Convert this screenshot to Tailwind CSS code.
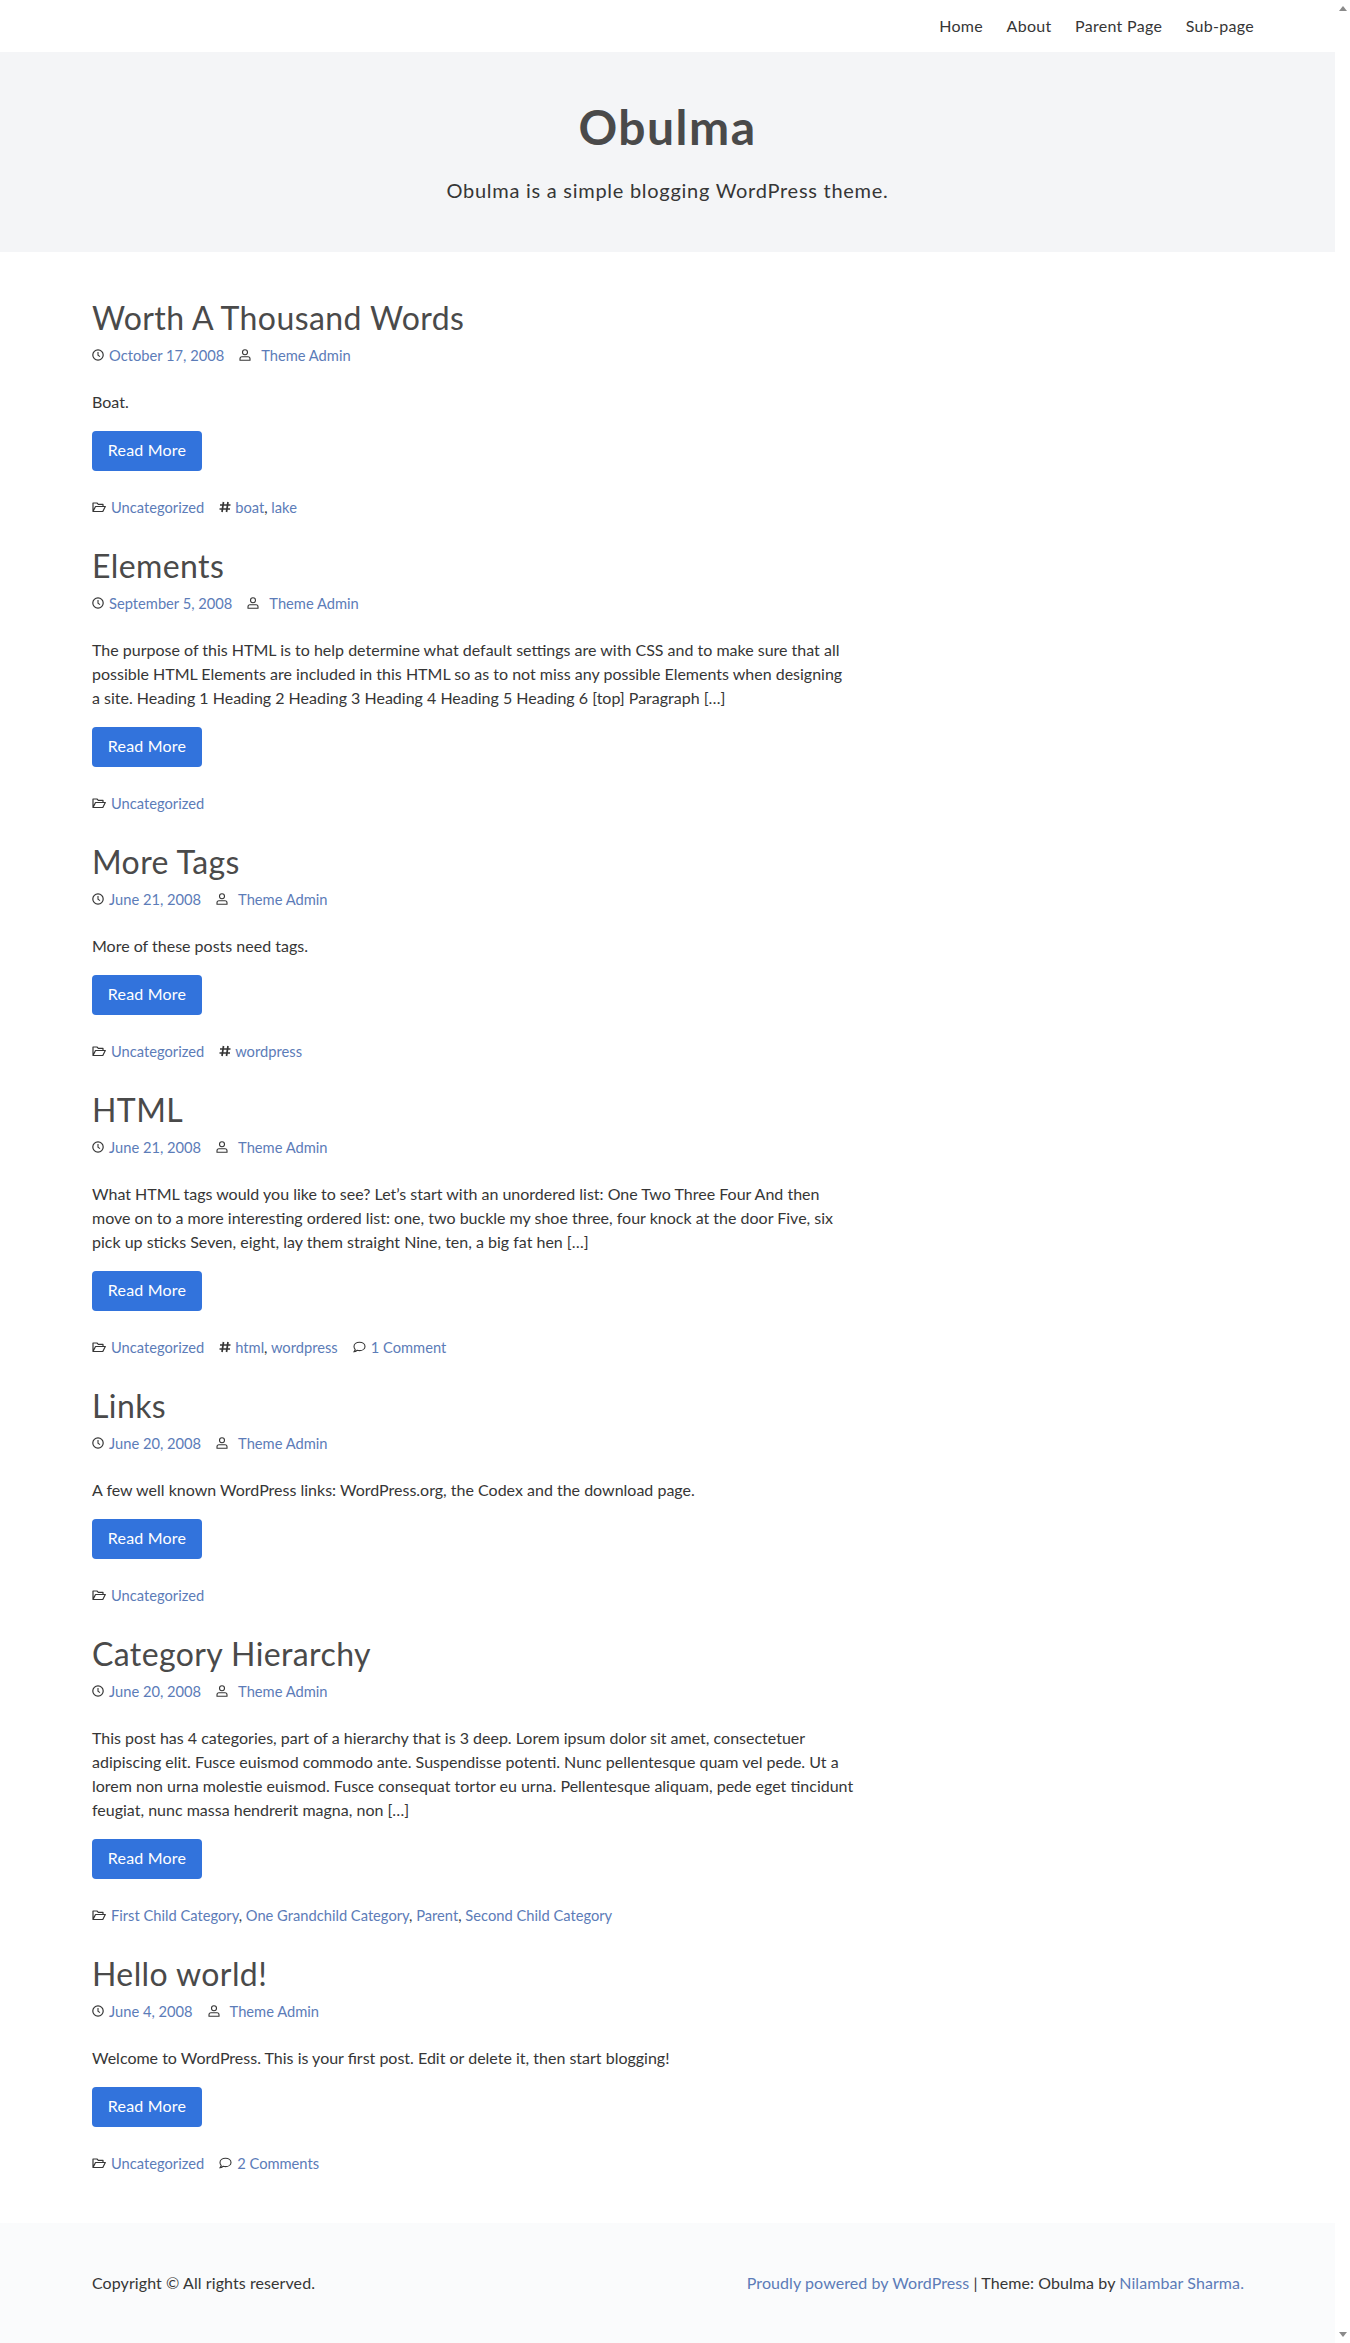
<!DOCTYPE html>
<html lang="en">
<head>
    <meta charset="UTF-8">
    <meta name="viewport" content="width=device-width, initial-scale=1.0">
    <script src="https://cdn.jsdelivr.net/npm/@tailwindcss/browser@4"></script>
    <title>Obulma</title>
</head>
<body class="font-['Lato',sans-serif] text-[#363636] text-base leading-6 bg-white">
    <!-- icon set -->
    <svg class="hidden">
        <symbol id="clock" viewBox="0 0 12 12"><circle cx="6" cy="6" r="5.2" fill="none" stroke="currentColor" stroke-width="1.2"/><path d="M6 3v3.3l2 1.3" fill="none" stroke="currentColor" stroke-width="1.1"/></symbol>
        <symbol id="user" viewBox="0 0 12 12"><circle cx="6" cy="3.2" r="2.5" fill="none" stroke="currentColor" stroke-width="1.1"/><path d="M1 11.2V9.8c0-1.2.9-2 2-2h6c1.100 0 2 .8 2 2v1.400z" fill="none" stroke="currentColor" stroke-width="1.1"/></symbol>
        <symbol id="folder" viewBox="0 0 14 12"><path d="M1 10.500V2h4l1.300 1.300h4.700v2M1 10.500h9.800L13.300 5.500H3.500z" fill="none" stroke="currentColor" stroke-width="1.200" stroke-linejoin="round"/></symbol>
        <symbol id="hash" viewBox="0 0 12 12"><path d="M4.500 1 3 11M9 1 7.500 11M1 4h10.500M.5 8h10.500" fill="none" stroke="currentColor" stroke-width="1.700"/></symbol>
        <symbol id="comment" viewBox="0 0 13 12"><path d="M6.500 1.200c3 0 5.500 1.800 5.500 4.200s-2.500 4.200-5.500 4.200c-.8 0-1.500-.1-2.200-.3C3.400 10 2.300 10.800 1 10.800c.7-.8 1.100-1.700 1.200-2.400C1.400 7.600 1 6.600 1 5.400 1 3 3.500 1.200 6.500 1.200z" fill="none" stroke="currentColor" stroke-width="1.100"/></symbol>
    </svg>

    <div class="flex min-h-[2343px]">
        <div class="w-[1335px]">
            <nav class="h-[52px] flex justify-end items-center pr-[81px] gap-[23.500px] tracking-[0.3px]">
                <a href="#">Home</a>
                <a href="#">About</a>
                <a href="#">Parent Page</a>
                <a href="#">Sub-page</a>
            </nav>

            <section class="h-[200px] bg-[#f4f5f7] pt-12 text-center">
                <h1 class="text-5xl leading-[54px] font-bold text-[#4a4a4a] mb-6 tracking-[1.5px]">Obulma</h1>
                <p class="text-xl leading-[25px] tracking-[0.73px]">Obulma is a simple blogging WordPress theme.</p>
            </section>

            <main class="pt-[46px] pb-[21px] pl-[92px] w-[900px]">
                <article class="pb-[27px]">
                    <h2 class="text-[32px] leading-10 text-[#4a4a4a] tracking-[0.4px] mb-2">Worth A Thousand Words</h2>
                    <div class="flex items-center text-[14.700px] h-[21px] pb-1 mb-6">
                        <svg class="w-3 h-3 mr-[5px]"><use href="#clock"/></svg>
                        <a href="#" class="text-[#5c7cb8]">October 17, 2008</a>
                        <svg class="w-3 h-3 ml-[15px] mr-[10px]"><use href="#user"/></svg>
                        <a href="#" class="text-[#5c7cb8]">Theme Admin</a>
                    </div>
                    <p class="-mt-px mb-[17px]">Boat.</p>
                    <a href="#" class="flex w-[110px] h-10 pb-[2px] items-center justify-center rounded bg-[#3273dc] text-white tracking-[0.2px] mb-[27px]">Read More</a>
                    <div class="flex items-center text-[14.700px] h-[21px] pb-1">
                        <svg class="w-[14px] h-3 mr-[5px]"><use href="#folder"/></svg>
                        <a href="#" class="text-[#5c7cb8]">Uncategorized</a>
                        <svg class="w-3 h-3 ml-[15px] mr-1"><use href="#hash"/></svg>
                        <span class="text-[#5c7cb8]"><a href="#">boat</a><span class="text-[#363636]">,</span> <a href="#">lake</a></span>
                    </div>
                </article>

                <article class="pb-[27px]">
                    <h2 class="text-[32px] leading-10 text-[#4a4a4a] tracking-[0.4px] mb-2">Elements</h2>
                    <div class="flex items-center text-[14.700px] h-[21px] pb-1 mb-6">
                        <svg class="w-3 h-3 mr-[5px]"><use href="#clock"/></svg>
                        <a href="#" class="text-[#5c7cb8]">September 5, 2008</a>
                        <svg class="w-3 h-3 ml-[15px] mr-[10px]"><use href="#user"/></svg>
                        <a href="#" class="text-[#5c7cb8]">Theme Admin</a>
                    </div>
                    <p class="-mt-px mb-[17px]">The purpose of this HTML is to help determine what default settings are with CSS and to make sure that all<br>possible HTML Elements are included in this HTML so as to not miss any possible Elements when designing<br>a site. Heading 1 Heading 2 Heading 3 Heading 4 Heading 5 Heading 6 [top] Paragraph […]</p>
                    <a href="#" class="flex w-[110px] h-10 pb-[2px] items-center justify-center rounded bg-[#3273dc] text-white tracking-[0.2px] mb-[27px]">Read More</a>
                    <div class="flex items-center text-[14.700px] h-[21px] pb-1">
                        <svg class="w-[14px] h-3 mr-[5px]"><use href="#folder"/></svg>
                        <a href="#" class="text-[#5c7cb8]">Uncategorized</a>
                    </div>
                </article>

                <article class="pb-[27px]">
                    <h2 class="text-[32px] leading-10 text-[#4a4a4a] tracking-[0.4px] mb-2">More Tags</h2>
                    <div class="flex items-center text-[14.700px] h-[21px] pb-1 mb-6">
                        <svg class="w-3 h-3 mr-[5px]"><use href="#clock"/></svg>
                        <a href="#" class="text-[#5c7cb8]">June 21, 2008</a>
                        <svg class="w-3 h-3 ml-[15px] mr-[10px]"><use href="#user"/></svg>
                        <a href="#" class="text-[#5c7cb8]">Theme Admin</a>
                    </div>
                    <p class="-mt-px mb-[17px]">More of these posts need tags.</p>
                    <a href="#" class="flex w-[110px] h-10 pb-[2px] items-center justify-center rounded bg-[#3273dc] text-white tracking-[0.2px] mb-[27px]">Read More</a>
                    <div class="flex items-center text-[14.700px] h-[21px] pb-1">
                        <svg class="w-[14px] h-3 mr-[5px]"><use href="#folder"/></svg>
                        <a href="#" class="text-[#5c7cb8]">Uncategorized</a>
                        <svg class="w-3 h-3 ml-[15px] mr-1"><use href="#hash"/></svg>
                        <a href="#" class="text-[#5c7cb8]">wordpress</a>
                    </div>
                </article>

                <article class="pb-[27px]">
                    <h2 class="text-[32px] leading-10 text-[#4a4a4a] tracking-[0.4px] mb-2">HTML</h2>
                    <div class="flex items-center text-[14.700px] h-[21px] pb-1 mb-6">
                        <svg class="w-3 h-3 mr-[5px]"><use href="#clock"/></svg>
                        <a href="#" class="text-[#5c7cb8]">June 21, 2008</a>
                        <svg class="w-3 h-3 ml-[15px] mr-[10px]"><use href="#user"/></svg>
                        <a href="#" class="text-[#5c7cb8]">Theme Admin</a>
                    </div>
                    <p class="-mt-px mb-[17px]">What HTML tags would you like to see? Let’s start with an unordered list: One Two Three Four And then<br>move on to a more interesting ordered list: one, two buckle my shoe three, four knock at the door Five, six<br>pick up sticks Seven, eight, lay them straight Nine, ten, a big fat hen […]</p>
                    <a href="#" class="flex w-[110px] h-10 pb-[2px] items-center justify-center rounded bg-[#3273dc] text-white tracking-[0.2px] mb-[27px]">Read More</a>
                    <div class="flex items-center text-[14.700px] h-[21px] pb-1">
                        <svg class="w-[14px] h-3 mr-[5px]"><use href="#folder"/></svg>
                        <a href="#" class="text-[#5c7cb8]">Uncategorized</a>
                        <svg class="w-3 h-3 ml-[15px] mr-1"><use href="#hash"/></svg>
                        <span class="text-[#5c7cb8]"><a href="#">html</a><span class="text-[#363636]">,</span> <a href="#">wordpress</a></span>
                        <svg class="w-[13px] h-3 ml-[15px] mr-[5px]"><use href="#comment"/></svg>
                        <a href="#" class="text-[#5c7cb8]">1 Comment</a>
                    </div>
                </article>

                <article class="pb-[27px]">
                    <h2 class="text-[32px] leading-10 text-[#4a4a4a] tracking-[0.4px] mb-2">Links</h2>
                    <div class="flex items-center text-[14.700px] h-[21px] pb-1 mb-6">
                        <svg class="w-3 h-3 mr-[5px]"><use href="#clock"/></svg>
                        <a href="#" class="text-[#5c7cb8]">June 20, 2008</a>
                        <svg class="w-3 h-3 ml-[15px] mr-[10px]"><use href="#user"/></svg>
                        <a href="#" class="text-[#5c7cb8]">Theme Admin</a>
                    </div>
                    <p class="-mt-px mb-[17px]">A few well known WordPress links: WordPress.org, the Codex and the download page.</p>
                    <a href="#" class="flex w-[110px] h-10 pb-[2px] items-center justify-center rounded bg-[#3273dc] text-white tracking-[0.2px] mb-[27px]">Read More</a>
                    <div class="flex items-center text-[14.700px] h-[21px] pb-1">
                        <svg class="w-[14px] h-3 mr-[5px]"><use href="#folder"/></svg>
                        <a href="#" class="text-[#5c7cb8]">Uncategorized</a>
                    </div>
                </article>

                <article class="pb-[27px]">
                    <h2 class="text-[32px] leading-10 text-[#4a4a4a] tracking-[0.4px] mb-2">Category Hierarchy</h2>
                    <div class="flex items-center text-[14.700px] h-[21px] pb-1 mb-6">
                        <svg class="w-3 h-3 mr-[5px]"><use href="#clock"/></svg>
                        <a href="#" class="text-[#5c7cb8]">June 20, 2008</a>
                        <svg class="w-3 h-3 ml-[15px] mr-[10px]"><use href="#user"/></svg>
                        <a href="#" class="text-[#5c7cb8]">Theme Admin</a>
                    </div>
                    <p class="-mt-px mb-[17px]">This post has 4 categories, part of a hierarchy that is 3 deep. Lorem ipsum dolor sit amet, consectetuer<br>adipiscing elit. Fusce euismod commodo ante. Suspendisse potenti. Nunc pellentesque quam vel pede. Ut a<br>lorem non urna molestie euismod. Fusce consequat tortor eu urna. Pellentesque aliquam, pede eget tincidunt<br>feugiat, nunc massa hendrerit magna, non […]</p>
                    <a href="#" class="flex w-[110px] h-10 pb-[2px] items-center justify-center rounded bg-[#3273dc] text-white tracking-[0.2px] mb-[27px]">Read More</a>
                    <div class="flex items-center text-[14.700px] h-[21px] pb-1">
                        <svg class="w-[14px] h-3 mr-[5px]"><use href="#folder"/></svg>
                        <span class="text-[#5c7cb8]"><a href="#">First Child Category</a><span class="text-[#363636]">,</span> <a href="#">One Grandchild Category</a><span class="text-[#363636]">,</span> <a href="#">Parent</a><span class="text-[#363636]">,</span> <a href="#">Second Child Category</a></span>
                    </div>
                </article>

                <article class="pb-[27px]">
                    <h2 class="text-[32px] leading-10 text-[#4a4a4a] tracking-[0.4px] mb-2">Hello world!</h2>
                    <div class="flex items-center text-[14.700px] h-[21px] pb-1 mb-6">
                        <svg class="w-3 h-3 mr-[5px]"><use href="#clock"/></svg>
                        <a href="#" class="text-[#5c7cb8]">June 4, 2008</a>
                        <svg class="w-3 h-3 ml-[15px] mr-[10px]"><use href="#user"/></svg>
                        <a href="#" class="text-[#5c7cb8]">Theme Admin</a>
                    </div>
                    <p class="-mt-px mb-[17px]">Welcome to WordPress. This is your first post. Edit or delete it, then start blogging!</p>
                    <a href="#" class="flex w-[110px] h-10 pb-[2px] items-center justify-center rounded bg-[#3273dc] text-white tracking-[0.2px] mb-[27px]">Read More</a>
                    <div class="flex items-center text-[14.700px] h-[21px] pb-1">
                        <svg class="w-[14px] h-3 mr-[5px]"><use href="#folder"/></svg>
                        <a href="#" class="text-[#5c7cb8]">Uncategorized</a>
                        <svg class="w-[13px] h-3 ml-[15px] mr-[5px]"><use href="#comment"/></svg>
                        <a href="#" class="text-[#5c7cb8]">2 Comments</a>
                    </div>
                </article>
            </main>

            <footer class="h-[120px] bg-[#fafbfc] py-12 pl-[92px] pr-[91px] flex justify-between tracking-[0.08px]">
                <p>Copyright © All rights reserved.</p>
                <p><a href="#" class="text-[#5c7cb8]">Proudly powered by WordPress</a> | Theme: Obulma by <a href="#" class="text-[#5c7cb8]">Nilambar Sharma</a><span class="text-[#5c7cb8]">.</span></p>
            </footer>
        </div>

        <!-- scrollbar strip -->
        <div class="w-[15px] bg-white flex flex-col justify-between items-center py-[6px]">
            <svg class="w-2 h-[5px]" viewBox="0 0 8 5"><path d="M4 0l4 5H0z" fill="#8a8a8a"/></svg>
            <svg class="w-2 h-[5px]" viewBox="0 0 8 5"><path d="M0 0h8L4 5z" fill="#8a8a8a"/></svg>
        </div>
    </div>
</body>
</html>
